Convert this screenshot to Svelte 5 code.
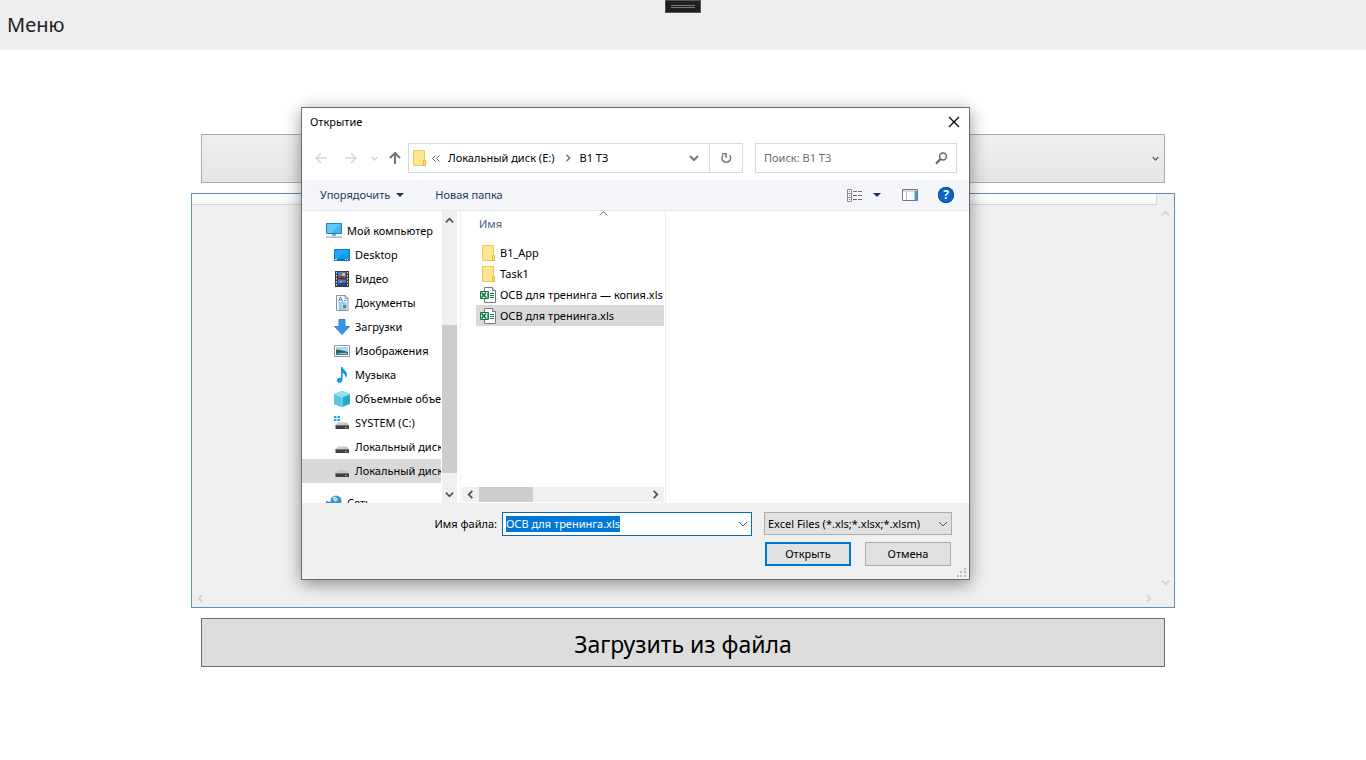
<script lang="ts">
  import { onMount } from 'svelte';

  const places = [
    { icon: 'desktop', label: 'Desktop' },
    { icon: 'video', label: 'Видео' },
    { icon: 'docs', label: 'Документы' },
    { icon: 'download', label: 'Загрузки' },
    { icon: 'pictures', label: 'Изображения' },
    { icon: 'music', label: 'Музыка' },
    { icon: 'cube', label: 'Объемные объекты' },
    { icon: 'system', label: 'SYSTEM (C:)' },
    { icon: 'drive', label: 'Локальный диск (D:)' },
    { icon: 'drive', label: 'Локальный диск (E:)', current: true }
  ];

  const files = [
    { icon: 'folder', name: 'B1_App' },
    { icon: 'folder', name: 'Task1' },
    { icon: 'excel', name: 'ОСВ для тренинга — копия.xls' },
    { icon: 'excel', name: 'ОСВ для тренинга.xls' }
  ];

  let selected = $state(3);
  let fileName = $state('ОСВ для тренинга.xls');
  let nameInput: HTMLInputElement;

  function pick(i: number) {
    selected = i;
    fileName = files[i].name;
  }

  onMount(() => {
    nameInput.focus();
    nameInput.select();
  });
</script>

{#snippet chevron(dir: string, size: number, weight: number)}
  <svg class="chev {dir}" width={size} height={size} viewBox="0 0 10 10" aria-hidden="true">
    <path d="M1 3l4 4 4-4" fill="none" stroke="currentColor" stroke-width={weight} />
  </svg>
{/snippet}

{#snippet icon(name: string)}
  <svg class="icon" width="16" height="16" viewBox="0 0 16 16" aria-hidden="true">
    {#if name === 'folder'}
      <path d="M2.500 .5h11v10.500h1v4.500h-12z" fill="#ffe694" stroke="#efca55" />
      <path d="M12.500 15v-4.500h2v5h-2z" fill="#ffe07a" stroke="#e9bd3c" />
    {:else if name === 'excel'}
      <path d="M4.500 .5h8l3 3v12h-11z" fill="#fff" stroke="#7a7a7a" />
      <path d="M12.500 .5v3h3" fill="#e8e8e8" stroke="#7a7a7a" />
      <path d="M10 6.500h4M10 8.500h4M10 10.500h4" stroke="#15814a" />
      <path d="M.5 4.500h8v7h-8z" fill="#fff" stroke="#107c41" />
      <path d="M1.500 5.500l4.500 5M6 5.500l-4.500 5" stroke="#107c41" stroke-width="1.800" />
      <path d="M7.500 5.500v5M5 10.500h3" stroke="#5aa982" />
    {:else if name === 'computer'}
      <path d="M.5 .5h15v10H.5z" fill="#41b4f5" stroke="#2582bd" />
      <path d="M1 1h14L5 10H1z" fill="#72cdff" opacity=".7" />
      <path d="M6 11h4v2H6z" fill="#8fa9bd" />
      <path d="M0 13.500h16V15H0z" fill="#a9bac8" />
    {:else if name === 'desktop'}
      <path d="M.5 2.500h15v11H.5z" fill="#0a9bf2" stroke="#0877c8" />
      <path d="M1 3h14L3 12H1z" fill="#31b0ff" opacity=".6" />
      <path d="M1 12h14v1H1z" fill="#0669b5" />
      <path d="M1 12.500h2M11 12.500h1M13 12.500h1" stroke="#e0f3ff" />
    {:else if name === 'video'}
      <path d="M1 0h14v16H1z" fill="#3b3b3f" />
      <path d="M2.500 1v14M13.500 1v14" stroke="#ddd" stroke-dasharray="1.500 1.500" />
      <path d="M4 1h8v6H4zM4 8.500h8V15H4z" fill="#3f7fe0" />
      <path d="M4 5h3l2-3 2 2v3H4z" fill="#a5362e" />
      <path d="M8 2h3v3H8z" fill="#efb93c" />
      <path d="M4 13l3-3 3 2 2-1v4H4z" fill="#273f92" />
      <path d="M6 10h2v2H6z" fill="#ec8b32" />
    {:else if name === 'docs'}
      <path d="M2.500 .5h9l2.500 2.500v12.500H2.500z" fill="#fff" stroke="#8c9298" />
      <path d="M11 .5V3.500h3" fill="#e6e9ec" stroke="#8c9298" />
      <path d="M4.500 6.500L6.500 2l2 4.500M5 5h3" fill="none" stroke="#2c8fd8" />
      <path d="M10 5.500h2.500M4.500 8h8M4.500 10h4M4.500 12h4M4.500 14h8" stroke="#2c9be8" />
      <path d="M9 9.500h3.500V13H9z" fill="#4a8aa2" />
    {:else if name === 'download'}
      <path d="M5 .5h6v7h4.500L8 15.500.5 7.500H5z" fill="#3a96e8" stroke="#2e84d2" />
    {:else if name === 'pictures'}
      <path d="M.5 2.500h15v11H.5z" fill="#fff" stroke="#959595" />
      <path d="M2 4h12v8H2z" fill="#a9d8f7" />
      <path d="M2 6.500c3 0 7 1 12 2.500v1H2z" fill="#34664e" />
      <path d="M2 9.500h12V12H2z" fill="#3c789f" />
      <path d="M5 10.500h8" stroke="#8ebed8" />
    {:else if name === 'music'}
      <path d="M7 0h1.500c.5 3 5 4 4.500 8-.2 1.500-1 2.500-1.800 3 .8-3-.7-4.500-2.700-5v6.500C8.500 16.500 3 17 3 13.500 3 11 6 10.500 7 11z" fill="#0e95f0" />
    {:else if name === 'cube'}
      <path d="M0 3l8-3 8 3v10l-8 3-8-3z" fill="#27a9c9" />
      <path d="M0 3l8-3 8 3-8 3z" fill="#8fe3f0" />
      <path d="M0 3l8 3v10l-8-3z" fill="#55c9de" />
      <path d="M8 6v10M0 3l8 3 8-3" fill="none" stroke="#a6edf5" stroke-width=".7" />
    {:else if name === 'system' || name === 'drive'}
      {#if name === 'system'}
        <path d="M0 1h2.500v2H0zM3.500 1H6v2H3.500zM0 4h2.500v2H0zM3.500 4H6v2H3.500z" fill="#16a6ee" />
      {/if}
      <path d="M4 7.500h9l2 3H1.500z" fill="#c3c6c9" />
      <path d="M1.500 10h13.500v4H1.500z" fill="#3d4043" />
      <path d="M1.500 10.500H15" stroke="#777" />
      <path d="M11 12h2v1h-2z" fill="#45d84f" />
    {:else if name === 'network'}
      <circle cx="10" cy="6" r="5.500" fill="#3d94c9" />
      <path d="M7 2c2-1 3 0 5 2l-2 3-3-2z" fill="#a9dced" />
      <path d="M0 6l8 2v8H0z" fill="#2f8ac9" />
    {/if}
  </svg>
{/snippet}

<div class="page">
  <header>
    <a href="#menu">Меню</a>
    <div class="grip"><i></i><i></i></div>
  </header>

  <main>
    <button class="combo" aria-label="Выбор файла">{@render chevron('down', 7, 2)}</button>
    <section class="sheet">
      <div class="strip"></div>
      <div class="vbar">{@render chevron('up', 9, 2)}{@render chevron('down', 9, 2)}</div>
      <div class="hbar">{@render chevron('left', 9, 2)}{@render chevron('right', 9, 2)}</div>
    </section>
    <button class="load">Загрузить из файла</button>
  </main>
</div>

<div class="dialog" role="dialog" aria-labelledby="dlg-title">
  <div class="title">
    <span id="dlg-title">Открытие</span>
    <button class="close" aria-label="Закрыть">
      <svg width="12" height="12" viewBox="0 0 12 12"><path d="M1 1l10 10M11 1L1 11" stroke="#000" stroke-width="1.200" /></svg>
    </button>
  </div>

  <div class="nav">
    <button class="arrow dim" aria-label="Назад">
      <svg width="14" height="14" viewBox="0 0 14 14"><path d="M13 7H2M7 2L2 7l5 5" /></svg>
    </button>
    <button class="arrow dim" aria-label="Вперед">
      <svg width="14" height="14" viewBox="0 0 14 14"><path d="M1 7h11M7 2l5 5-5 5" /></svg>
    </button>
    <button class="recent" aria-label="Последние расположения">{@render chevron('down', 7, 2)}</button>
    <button class="arrow up" aria-label="Вверх">
      <svg width="14" height="14" viewBox="0 0 14 14"><path d="M7 13V2M2 7l5-5 5 5" /></svg>
    </button>
    <div class="path">
      {@render icon('folder')}
      <svg class="dbl" width="8" height="7" viewBox="0 0 8 7"><path d="M3.500 .5l-3 3 3 3M7.500 .5l-3 3 3 3" fill="none" stroke="#666" /></svg>
      <a href="#disk">Локальный диск (E:)</a>
      {@render chevron('right', 8, 2)}
      <a href="#folder">B1 ТЗ</a>
      <button class="open" aria-label="Предыдущие расположения">{@render chevron('down', 10, 2)}</button>
      <button class="refresh" aria-label="Обновить">
        <svg width="12" height="12" viewBox="0 0 12 12">
          <path d="M9.500 3.200A4.300 4.300 0 1 1 3 3.200" fill="none" stroke="#777" stroke-width="1.600" />
          <path d="M2 1.800h4v4" fill="none" stroke="#777" stroke-width="1.600" />
        </svg>
      </button>
    </div>
    <div class="search">
      <input type="text" aria-label="Поиск" placeholder="Поиск: B1 ТЗ" />
      <svg width="13" height="13" viewBox="0 0 13 13"><circle cx="8" cy="4.500" r="3.400" fill="none" stroke="#666" stroke-width="1.500" /><path d="M5.500 7L1 11.800" stroke="#666" stroke-width="2" /></svg>
    </div>
  </div>

  <div class="tools">
    <button>Упорядочить <svg width="8" height="4" viewBox="0 0 8 4"><path d="M0 0h8L4 4z" fill="#1c3660" /></svg></button>
    <button class="new">Новая папка</button>
    <button class="views" aria-label="Вид">
      <svg width="16" height="13" viewBox="0 0 16 13">
        <path d="M.5 .5h4v12h-4zM.5 4.500h4M.5 8.500h4" fill="#fff" stroke="#8a8a8a" />
        <path d="M2 2.500h1M2 6.500h1" stroke="#4a80c0" /><path d="M2 10.500h1" stroke="#c33" />
        <path d="M6 2.500h10M6 6.500h10M6 10.500h10" stroke="#6e6e6e" stroke-dasharray="4 1" />
      </svg>
      <svg width="8" height="4" viewBox="0 0 8 4"><path d="M0 0h8L4 4z" fill="#1c3660" /></svg>
    </button>
    <button class="preview" aria-label="Область просмотра">
      <svg width="16" height="12" viewBox="0 0 16 12">
        <path d="M.5 .5h15v11H.5z" fill="#fff" stroke="#777" /><path d="M1 2h14M4.500 2v9" stroke="#bbb" /><path d="M12.500 2H15v9h-2.500z" fill="#3c9de6" />
      </svg>
    </button>
    <button class="help" aria-label="Справка">?</button>
  </div>

  <div class="body">
    <nav class="tree">
      <a class="root" href="#computer">{@render icon('computer')}<span>Мой компьютер</span></a>
      {#each places as p}
        <a href="#place" class:current={p.current}>{@render icon(p.icon)}<span>{p.label}</span></a>
      {/each}
      <a class="root net" href="#network">{@render icon('network')}<span>Сеть</span></a>
    </nav>
    <div class="vscroll">
      {@render chevron('up', 9, 2)}
      <div class="track"><div class="thumb"></div></div>
      {@render chevron('down', 9, 2)}
    </div>
    <div class="list">
      <div class="head"><span>Имя</span>{@render chevron('up', 9, 1)}</div>
      <div class="rows">
        {#each files as f, i}
          <button class:current={i === selected} onclick={() => pick(i)}>{@render icon(f.icon)}<span>{f.name}</span></button>
        {/each}
      </div>
      <div class="hscroll">
        {@render chevron('left', 9, 2)}
        <div class="track"><div class="thumb"></div></div>
        {@render chevron('right', 9, 2)}
      </div>
    </div>
  </div>

  <form class="foot" onsubmit={(e) => e.preventDefault()}>
    <div class="line">
      <label for="fname">Имя файла:</label>
      <div class="field">
        <input id="fname" type="text" spellcheck="false" autocomplete="off" bind:this={nameInput} bind:value={fileName} />
        {@render chevron('down', 10, 1)}
      </div>
      <div class="filter">
        <select aria-label="Тип файлов"><option>Excel Files (*.xls;*.xlsx;*.xlsm)</option></select>
        {@render chevron('down', 10, 1)}
      </div>
    </div>
    <div class="actions">
      <button class="primary">Открыть</button>
      <button type="button">Отмена</button>
    </div>
    <svg class="size" width="9" height="9" viewBox="0 0 9 9"><path d="M7 0h2v2H7zM3 3h2v2H3zM7 3h2v2H7zM0 7h2v2H0zM3 7h2v2H3zM7 7h2v2H7z" fill="#bbb" /></svg>
  </form>
</div>

<style>
  :global(body) {
    background: #fff;
    overflow: hidden;
    font-family: 'Noto Sans', 'Open Sans', sans-serif;
    font-size: 11px;
    line-height: 16px;
    color: #000;
  }
  * { box-sizing: border-box; }
  button, input, select { font: inherit; color: inherit; padding: 0; margin: 0; border: 0; background: none; border-radius: 0; outline: none; }
  a { color: inherit; text-decoration: none; }
  svg { flex: none; display: block; }
  .up { transform: rotate(180deg); }
  .left { transform: rotate(90deg); }
  .right { transform: rotate(-90deg); }

  .page { display: flex; flex-direction: column; height: 100vh; }
  header { position: relative; display: flex; align-items: center; height: 50px; padding: 0 7px; background: #efefef; font-size: 20px; line-height: 26px; color: #212121; }
  .grip { position: absolute; top: 0; left: calc(50% - 18px); width: 36px; height: 13px; padding: 4px 5px; border: 1px solid #555; background: #1f1f1f; display: flex; flex-direction: column; gap: 1px; }
  .grip i { height: 1px; background: #777; }
  main { flex: 1; display: flex; flex-direction: column; gap: 10px; padding: 84px 191px 93px; }
  .combo { height: 49px; margin: 0 10px; border: 1px solid #acacac; background: linear-gradient(#f0f0f0, #e5e5e5); color: #606060; display: flex; align-items: center; justify-content: flex-end; padding-right: 5px; }
  .sheet { flex: 1; display: grid; grid-template: 11px 1fr 18px / 1fr 17px; background: #f0f0f0; border: 1px solid #688caf; color: #d3d3d3; }
  .strip { border-bottom: 1px solid #d3d5d8; border-right: 1px solid #d9dbde; background: linear-gradient(#fff 40%, #f3f4f6); }
  .vbar { grid-column: 2; grid-row: 2; display: flex; flex-direction: column; align-items: center; justify-content: space-between; padding: 4px 0 2px; }
  .hbar { grid-column: 1; grid-row: 3; display: flex; align-items: center; justify-content: space-between; padding: 0 4px; }
  .load { height: 49px; margin: 0 10px; border: 1px solid #707070; background: #ddd; font-size: 23px; line-height: 28px; padding-top: 2px; }

  .dialog { position: absolute; left: 301px; top: 107px; width: 669px; border: 1px solid #6b6b6b; background: #fff; box-shadow: 0 4px 16px rgba(0, 0, 0, 0.42); }
  .title { display: flex; justify-content: space-between; align-items: center; height: 28px; padding: 0 9px 0 8px; }
  .nav { display: flex; align-items: center; height: 44px; padding: 0 12px; }
  .arrow { flex: none; width: 16px; color: #737373; margin-right: 14px; }
  .arrow path { fill: none; stroke: currentColor; stroke-width: 1.500; }
  .arrow.up { transform: none; margin: 0 4px 0 9px; }
  .arrow.up path { stroke-width: 2; }
  .dim, .recent { color: #d5d5d5; }
  .recent { margin-right: 1px; margin-left: -3px; }
  .path { flex: none; display: flex; align-items: center; width: 335px; height: 30px; border: 1px solid #d9d9d9; padding-left: 2px; }
  .path .dbl { margin: 0 8px 0 5px; }
  .path .right { margin: 0 8px 0 9px; color: #777; }
  .open { margin-left: auto; color: #777; padding: 0 10px; height: 100%; }
  .refresh { width: 33px; height: 100%; border-left: 1px solid #d9d9d9; padding-left: 10px; }
  .search { flex: 1; display: flex; align-items: center; height: 30px; margin-left: 12px; border: 1px solid #d9d9d9; padding: 0 8px; }
  .search input { flex: 1; min-width: 0; }
  .search input::placeholder { color: #6d6d6d; opacity: 1; }

  .tools { display: flex; align-items: center; height: 31px; padding: 0 15px 0 18px; background: #f4f6f9; border-bottom: 1px solid #e5e7ea; color: #1e395b; }
  .tools button { display: flex; align-items: center; gap: 6px; }
  .tools .new { margin: 0 auto 0 31px; }
  .tools .views { gap: 10px; }
  .tools .preview { margin: 0 20px 0 21px; }
  .tools .help { width: 16px; height: 16px; border-radius: 50%; justify-content: center; background: #0866c8; color: #fff; font-size: 12px; font-weight: 700; box-shadow: 0 0 0 1px #0a50a0 inset; }

  .body { display: flex; height: 292px; }
  .tree { width: 139px; padding-top: 8px; overflow: hidden; }
  .tree a { display: flex; align-items: center; gap: 5px; height: 24px; padding-left: 32px; white-space: nowrap; overflow: hidden; }
  .tree .root { padding-left: 24px; }
  .tree .net { margin-top: 8px; }
  .current { background: #d9d9d9; }
  .vscroll { display: flex; flex-direction: column; align-items: center; width: 15px; margin-left: 1px; padding: 5px 0 4px; gap: 6px; background: #f0f0f0; color: #555; }
  .vscroll .track { flex: 1; width: 100%; display: flex; align-items: flex-end; }
  .vscroll .thumb { width: 100%; height: 148px; margin-bottom: 11px; background: #cdcdcd; }
  .list { display: flex; flex-direction: column; width: 206px; margin-left: 3px; padding: 0 1px; border-left: 1px solid #f3f3f3; border-right: 1px solid #efefef; }
  .head { position: relative; height: 31px; padding: 5px 0 0 17px; color: #4c607a; }
  .head svg { position: absolute; top: -2px; left: 137px; color: #555; }
  .rows { flex: 1; padding-left: 14px; }
  .rows button { display: flex; align-items: center; gap: 4px; width: 100%; height: 21px; padding-left: 4px; white-space: nowrap; overflow: hidden; text-align: left; }
  .hscroll { display: flex; align-items: center; height: 15px; margin-bottom: 1px; padding: 0 4px; gap: 4px; background: #f0f0f0; color: #555; }
  .hscroll .track { flex: 1; height: 100%; }
  .hscroll .thumb { width: 54px; height: 100%; background: #cdcdcd; }

  .foot { position: relative; height: 76px; padding: 9px 17px 0 0; background: #f0f0f0; }
  .line { display: flex; align-items: center; height: 24px; }
  .line label { flex: 1; text-align: right; padding-right: 5px; }
  .field { display: flex; align-items: center; width: 250px; height: 24px; border: 1px solid #0a6cbd; background: #fff; padding: 0 3px; }
  .field input { flex: 1; min-width: 0; }
  .field input::selection { background: #0078d7; color: #fff; }
  .field svg, .filter svg { color: #555; }
  .filter { display: flex; align-items: center; align-self: flex-start; width: 188px; height: 23px; margin-left: 12px; border: 1px solid #adadad; background: #e1e1e1; padding: 0 3px; }
  .filter select { flex: 1; min-width: 0; appearance: none; }
  .actions { display: flex; justify-content: flex-end; gap: 14px; margin-top: 6px; padding-right: 1px; }
  .actions button { width: 86px; height: 24px; border: 1px solid #adadad; background: #e1e1e1; }
  .actions .primary { border: 2px solid #0078d7; }
  .size { position: absolute; right: 3px; bottom: 2px; }
</style>
